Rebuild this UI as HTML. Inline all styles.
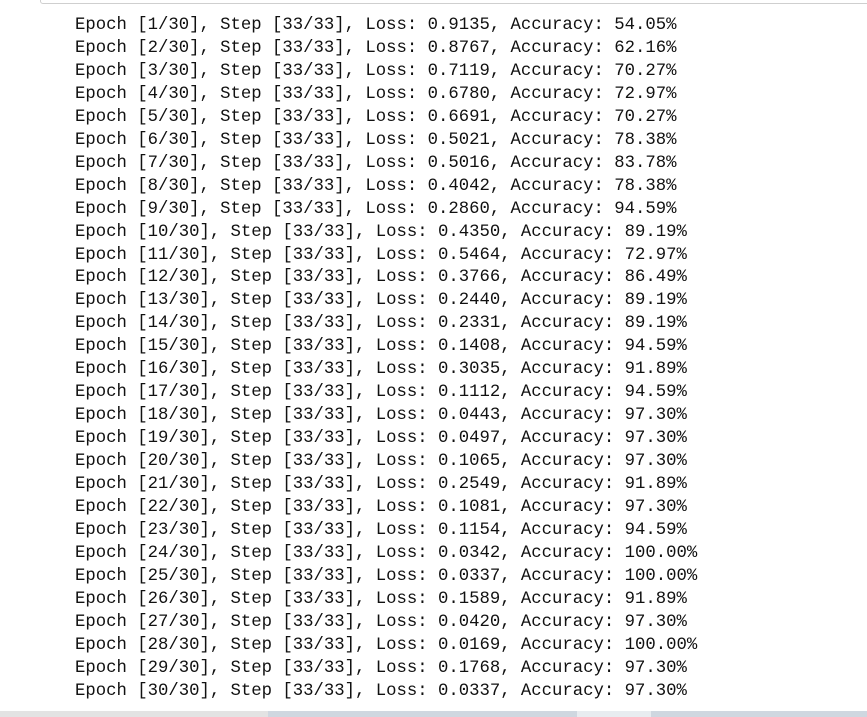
<!DOCTYPE html>
<html><head><meta charset="utf-8"><style>
html,body{margin:0;padding:0;background:#fff;width:867px;height:717px;overflow:hidden;position:relative}
.top{position:absolute;left:40px;top:-6px;width:840px;height:8px;border:1px solid #cfcfcf;border-radius:3px;background:#fff}
pre{position:absolute;left:75px;top:15px;margin:0;font-family:"Liberation Mono",monospace;font-size:17.3px;line-height:22.95px;color:#111;letter-spacing:0}
.b1{position:absolute;top:711px;height:6px;left:0;width:268px;background:#e3e3e3}
.b2{position:absolute;top:711px;height:6px;left:268px;width:309px;background:#cfd7e0}
.b3{position:absolute;top:711px;height:6px;left:577px;width:74px;background:#e8ecf0}
.b4{position:absolute;top:711px;height:6px;left:651px;width:216px;background:#cfd7e0}
</style></head><body>
<div class="top"></div>
<pre>Epoch [1/30], Step [33/33], Loss: 0.9135, Accuracy: 54.05%
Epoch [2/30], Step [33/33], Loss: 0.8767, Accuracy: 62.16%
Epoch [3/30], Step [33/33], Loss: 0.7119, Accuracy: 70.27%
Epoch [4/30], Step [33/33], Loss: 0.6780, Accuracy: 72.97%
Epoch [5/30], Step [33/33], Loss: 0.6691, Accuracy: 70.27%
Epoch [6/30], Step [33/33], Loss: 0.5021, Accuracy: 78.38%
Epoch [7/30], Step [33/33], Loss: 0.5016, Accuracy: 83.78%
Epoch [8/30], Step [33/33], Loss: 0.4042, Accuracy: 78.38%
Epoch [9/30], Step [33/33], Loss: 0.2860, Accuracy: 94.59%
Epoch [10/30], Step [33/33], Loss: 0.4350, Accuracy: 89.19%
Epoch [11/30], Step [33/33], Loss: 0.5464, Accuracy: 72.97%
Epoch [12/30], Step [33/33], Loss: 0.3766, Accuracy: 86.49%
Epoch [13/30], Step [33/33], Loss: 0.2440, Accuracy: 89.19%
Epoch [14/30], Step [33/33], Loss: 0.2331, Accuracy: 89.19%
Epoch [15/30], Step [33/33], Loss: 0.1408, Accuracy: 94.59%
Epoch [16/30], Step [33/33], Loss: 0.3035, Accuracy: 91.89%
Epoch [17/30], Step [33/33], Loss: 0.1112, Accuracy: 94.59%
Epoch [18/30], Step [33/33], Loss: 0.0443, Accuracy: 97.30%
Epoch [19/30], Step [33/33], Loss: 0.0497, Accuracy: 97.30%
Epoch [20/30], Step [33/33], Loss: 0.1065, Accuracy: 97.30%
Epoch [21/30], Step [33/33], Loss: 0.2549, Accuracy: 91.89%
Epoch [22/30], Step [33/33], Loss: 0.1081, Accuracy: 97.30%
Epoch [23/30], Step [33/33], Loss: 0.1154, Accuracy: 94.59%
Epoch [24/30], Step [33/33], Loss: 0.0342, Accuracy: 100.00%
Epoch [25/30], Step [33/33], Loss: 0.0337, Accuracy: 100.00%
Epoch [26/30], Step [33/33], Loss: 0.1589, Accuracy: 91.89%
Epoch [27/30], Step [33/33], Loss: 0.0420, Accuracy: 97.30%
Epoch [28/30], Step [33/33], Loss: 0.0169, Accuracy: 100.00%
Epoch [29/30], Step [33/33], Loss: 0.1768, Accuracy: 97.30%
Epoch [30/30], Step [33/33], Loss: 0.0337, Accuracy: 97.30%</pre>
<div class="b1"></div><div class="b2"></div><div class="b3"></div><div class="b4"></div>
</body></html>
